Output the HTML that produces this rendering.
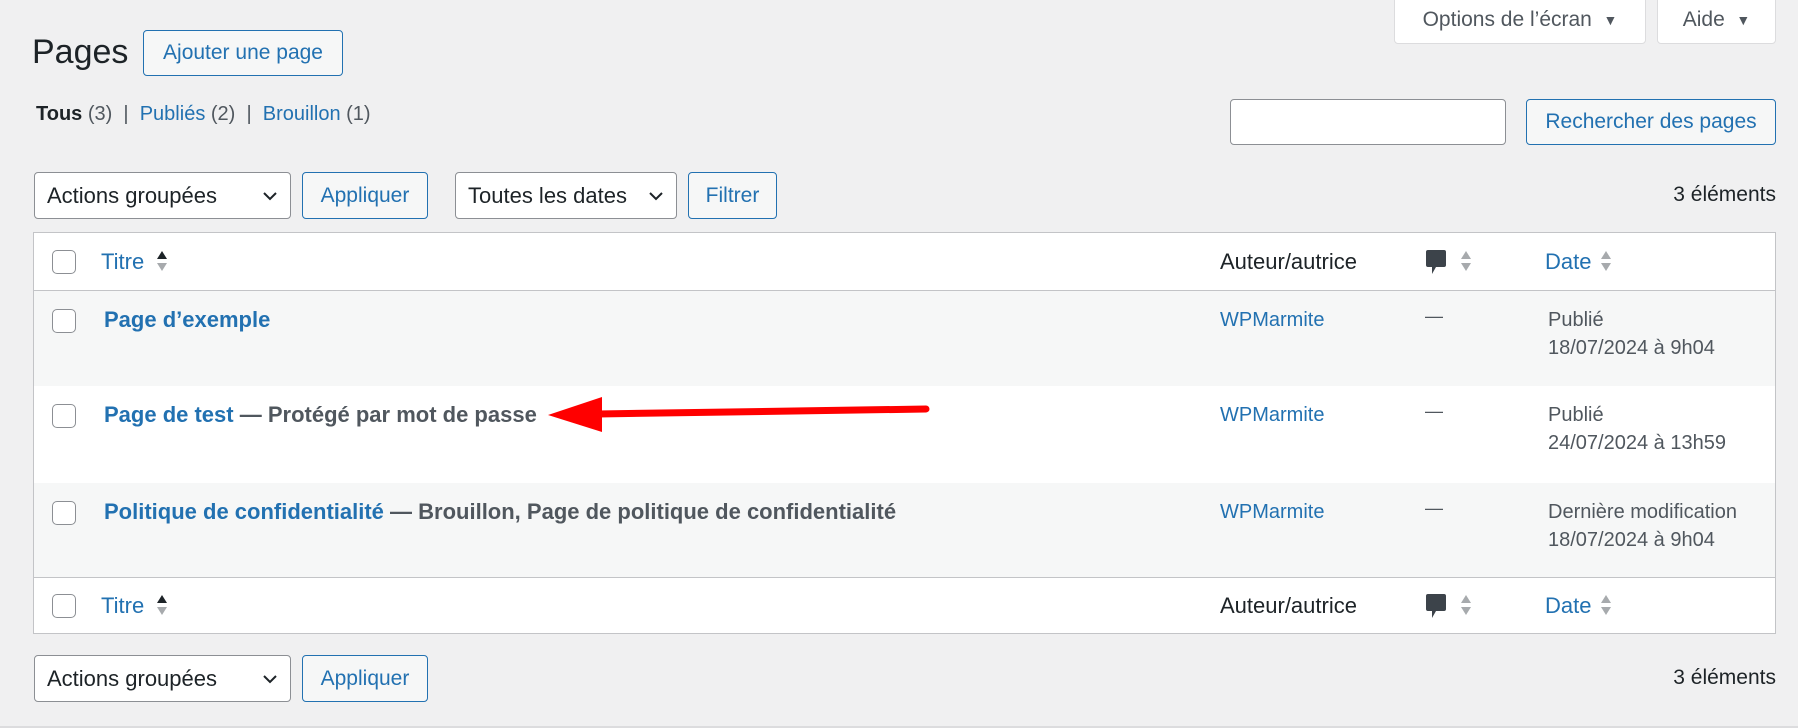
<!DOCTYPE html>
<html><head><meta charset="utf-8"><style>
*{box-sizing:border-box;margin:0;padding:0}
body{width:1798px;height:728px;background:#f0f0f1;font-family:"Liberation Sans",Arial,sans-serif;color:#1d2327;position:relative;overflow:hidden;font-size:21px}
.a{position:absolute;white-space:nowrap}
.btn{position:absolute;border:1px solid #2271b1;border-radius:4px;background:#f6f7f7;color:#2271b1;font-size:21px;display:flex;align-items:center;justify-content:center;white-space:nowrap}
.sel{position:absolute;border:1px solid #8c8f94;border-radius:4px;background:#fff;color:#1d2327;font-size:22px;display:flex;align-items:center;padding-left:12px;white-space:nowrap}
.sel svg{position:absolute;right:12px;top:17px}
.blue{color:#2271b1}
.tb{position:absolute;left:33px;top:232px;width:1743px;height:402px;background:#fff;border:1px solid #c3c4c7}
.row{position:absolute;left:0;width:100%}
.cb{position:absolute;left:18px;width:24px;height:24px;border:1px solid #8c8f94;border-radius:5px;background:#fff}
.h{font-size:22px;line-height:26px}
.t{font-size:22px;line-height:26px;font-weight:bold}
.d{font-size:20px;line-height:28px;color:#50575e}
</style></head><body>
<div class="a" style="left:32px;top:32px;font-size:34px;line-height:40px;color:#1d2327">Pages</div>
<div class="btn" style="left:143px;top:30px;width:200px;height:46px">Ajouter une page</div>
<div class="a" style="left:1394px;top:-4px;width:252px;height:48px;background:#fff;border:1px solid #dcdcde;border-radius:0 0 4px 4px;font-size:21px;color:#50575e;display:flex;align-items:center;justify-content:center">Options de l’écran&nbsp;&nbsp;<span style="font-size:14px">▼</span></div>
<div class="a" style="left:1657px;top:-4px;width:119px;height:48px;background:#fff;border:1px solid #dcdcde;border-radius:0 0 4px 4px;font-size:21px;color:#50575e;display:flex;align-items:center;justify-content:center">Aide&nbsp;&nbsp;<span style="font-size:14px">▼</span></div>
<div class="a" style="left:36px;top:101px;font-size:20px;line-height:26px;color:#50575e"><b style="color:#1d2327">Tous</b> (3) &nbsp;| &nbsp;<span class="blue">Publiés</span> (2) &nbsp;| &nbsp;<span class="blue">Brouillon</span> (1)</div>
<div class="a" style="left:1230px;top:99px;width:276px;height:46px;background:#fff;border:1px solid #8c8f94;border-radius:4px"></div>
<div class="btn" style="left:1526px;top:99px;width:250px;height:46px">Rechercher des pages</div>

<div class="sel" style="left:34px;top:172px;width:257px;height:47px">Actions groupées<svg width="16" height="12" viewBox="0 0 16 12"><path d="M2 3l6 6 6-6" fill="none" stroke="#1d2327" stroke-width="2"/></svg></div>
<div class="btn" style="left:302px;top:172px;width:126px;height:47px">Appliquer</div>
<div class="sel" style="left:455px;top:172px;width:222px;height:47px">Toutes les dates<svg width="16" height="12" viewBox="0 0 16 12"><path d="M2 3l6 6 6-6" fill="none" stroke="#1d2327" stroke-width="2"/></svg></div>
<div class="btn" style="left:688px;top:172px;width:89px;height:47px">Filtrer</div>
<div class="a" style="right:22px;top:182px;font-size:21px;line-height:26px;color:#1d2327">3 éléments</div>

<div class="tb">
 <div class="row" style="top:0;height:58px;border-bottom:1px solid #c3c4c7">
  <div class="cb" style="top:17px"></div>
  <div class="a blue h" style="left:67px;top:16px">Titre</div>
  <svg class="a" style="left:122px;top:16px" width="12" height="24" viewBox="0 0 12 24"><path d="M1 10L6 2L11 10Z" fill="#1d2327"/><path d="M1 14L6 22L11 14Z" fill="#a7aaad"/></svg>
  <div class="a h" style="left:1186px;top:16px">Auteur/autrice</div>
  <svg class="a" style="left:1391px;top:16px" width="22" height="28" viewBox="0 0 22 28"><path d="M3 1h16a2 2 0 0 1 2 2v13a2 2 0 0 1-2 2h-8l-4 7v-7H3a2 2 0 0 1-2-2V3a2 2 0 0 1 2-2z" fill="#3c434a"/></svg>
  <svg class="a" style="left:1426px;top:16px" width="12" height="24" viewBox="0 0 12 24"><path d="M1 10L6 2L11 10Z" fill="#a7aaad"/><path d="M1 14L6 22L11 14Z" fill="#a7aaad"/></svg>
  <div class="a blue h" style="left:1511px;top:16px">Date</div>
  <svg class="a" style="left:1566px;top:16px" width="12" height="24" viewBox="0 0 12 24"><path d="M1 10L6 2L11 10Z" fill="#a7aaad"/><path d="M1 14L6 22L11 14Z" fill="#a7aaad"/></svg>
 </div>
 <div class="row" style="top:58px;height:95px;background:#f6f7f7">
  <div class="cb" style="top:18px"></div>
  <div class="a blue t" style="left:70px;top:16px">Page d’exemple</div>
  <div class="a blue d" style="left:1186px;top:15px;color:#2271b1">WPMarmite</div>
  <div class="a" style="left:1391px;top:15px;color:#50575e;font-size:18px">—</div>
  <div class="a d" style="left:1514px;top:15px">Publié<br>18/07/2024 à 9h04</div>
 </div>
 <div class="row" style="top:153px;height:97px;background:#fff">
  <div class="cb" style="top:18px"></div>
  <div class="a t" style="left:70px;top:16px;color:#50575e"><span class="blue">Page de test</span> — Protégé par mot de passe</div>
  <div class="a blue d" style="left:1186px;top:15px;color:#2271b1">WPMarmite</div>
  <div class="a" style="left:1391px;top:15px;color:#50575e;font-size:18px">—</div>
  <div class="a d" style="left:1514px;top:15px">Publié<br>24/07/2024 à 13h59</div>
 </div>
 <div class="row" style="top:250px;height:95px;background:#f6f7f7;border-bottom:1px solid #c3c4c7">
  <div class="cb" style="top:18px"></div>
  <div class="a t" style="left:70px;top:16px;color:#50575e"><span class="blue">Politique de confidentialité</span> — Brouillon, Page de politique de confidentialité</div>
  <div class="a blue d" style="left:1186px;top:15px;color:#2271b1">WPMarmite</div>
  <div class="a" style="left:1391px;top:15px;color:#50575e;font-size:18px">—</div>
  <div class="a d" style="left:1514px;top:15px">Dernière modification<br>18/07/2024 à 9h04</div>
 </div>
 <div class="row" style="top:345px;height:56px">
  <div class="cb" style="top:16px"></div>
  <div class="a blue h" style="left:67px;top:15px">Titre</div>
  <svg class="a" style="left:122px;top:15px" width="12" height="24" viewBox="0 0 12 24"><path d="M1 10L6 2L11 10Z" fill="#1d2327"/><path d="M1 14L6 22L11 14Z" fill="#a7aaad"/></svg>
  <div class="a h" style="left:1186px;top:15px">Auteur/autrice</div>
  <svg class="a" style="left:1391px;top:15px" width="22" height="28" viewBox="0 0 22 28"><path d="M3 1h16a2 2 0 0 1 2 2v13a2 2 0 0 1-2 2h-8l-4 7v-7H3a2 2 0 0 1-2-2V3a2 2 0 0 1 2-2z" fill="#3c434a"/></svg>
  <svg class="a" style="left:1426px;top:15px" width="12" height="24" viewBox="0 0 12 24"><path d="M1 10L6 2L11 10Z" fill="#a7aaad"/><path d="M1 14L6 22L11 14Z" fill="#a7aaad"/></svg>
  <div class="a blue h" style="left:1511px;top:15px">Date</div>
  <svg class="a" style="left:1566px;top:15px" width="12" height="24" viewBox="0 0 12 24"><path d="M1 10L6 2L11 10Z" fill="#a7aaad"/><path d="M1 14L6 22L11 14Z" fill="#a7aaad"/></svg>
 </div>
</div>

<svg class="a" style="left:540px;top:390px" width="400" height="50" viewBox="0 0 400 50"><path d="M58 24L386 19" stroke="#f00" stroke-width="7" stroke-linecap="round"/><path d="M8 25L62 7L62 42Z" fill="#f00"/></svg>

<div class="sel" style="left:34px;top:655px;width:257px;height:47px">Actions groupées<svg width="16" height="12" viewBox="0 0 16 12"><path d="M2 3l6 6 6-6" fill="none" stroke="#1d2327" stroke-width="2"/></svg></div>
<div class="btn" style="left:302px;top:655px;width:126px;height:47px">Appliquer</div>
<div class="a" style="right:22px;top:665px;font-size:21px;line-height:26px;color:#1d2327">3 éléments</div>
<div class="a" style="left:0;top:726px;width:1798px;height:2px;background:#dcdcde"></div>
</body></html>
